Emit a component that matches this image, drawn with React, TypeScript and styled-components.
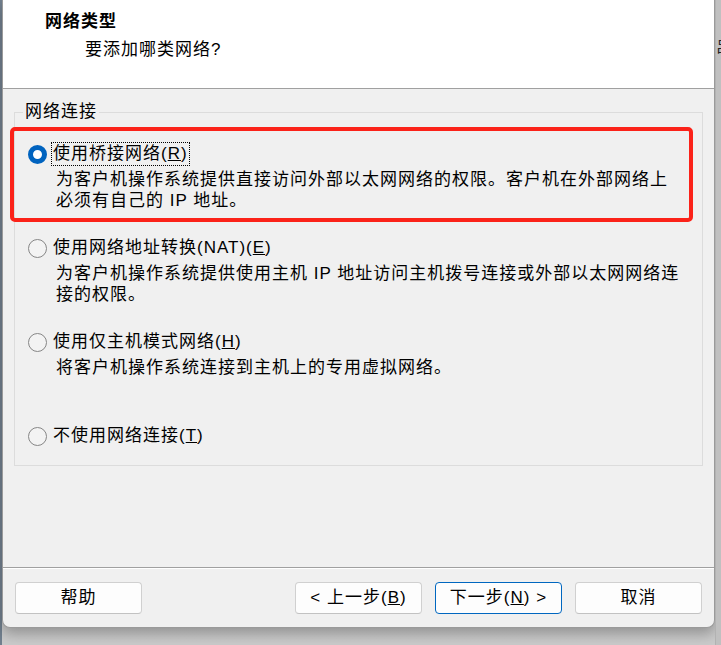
import React from 'react';
import styled, { createGlobalStyle } from 'styled-components';

const GlobalStyle = createGlobalStyle`
  html, body { margin: 0; padding: 0; }
  body {
    background: #c6c6c6;
    font-family: "Liberation Sans", "Noto Sans CJK SC", sans-serif;
    color: #000;
  }
`;

const Screen = styled.div`
  width: 721px;
  height: 645px;
  overflow: hidden;
  position: relative;
  display: flex;
  align-items: flex-start;
  background: linear-gradient(#c2c2c2, #cbcbcb);
`;

const EdgeLine = styled.div`
  width: 2px;
  align-self: stretch;
  background: #72808f;
`;

const Dialog = styled.div`
  width: 713px;
  height: 628px;
  box-sizing: border-box;
  border: 1px solid #9a9a9a;
  border-top: none;
  border-radius: 0 0 8px 8px;
  background: #f0f0f0;
  display: flex;
  flex-direction: column;
  box-shadow: 0 6px 14px rgba(0, 0, 0, 0.28);
  overflow: hidden;
  flex-shrink: 0;
`;

const RightStrip = styled.div`
  flex: 1;
  align-self: stretch;
  overflow: hidden;
  background: #c0c0c0;
  border-left: 1px solid #b2b2b2;
`;

const StripGlyph = styled.div`
  margin-top: 37px;
  font-family: "Noto Sans CJK SC", sans-serif;
  font-size: 15px;
  line-height: 18px;
  white-space: nowrap;
  color: #222;
`;

const Header = styled.div`
  height: 89px;
  background: #fff;
  border-bottom: 1px solid #a0a0a0;
  padding: 12px 0 0 42px;
  box-sizing: border-box;
  flex-shrink: 0;
`;

const Title = styled.div`
  font-size: 17px;
  line-height: 20px;
  font-weight: bold;
  letter-spacing: 1px;
`;

const Subtitle = styled.div`
  margin: 8px 0 0 40px;
  font-size: 17px;
  line-height: 20px;
  letter-spacing: 1px;
`;

const Body = styled.div`
  flex: 1;
  padding: 13px 11px 0 11px;
`;

const Group = styled.fieldset`
  margin: 0;
  padding: 0;
  min-width: 0;
  border: 1px solid #dcdcdc;
`;

const Legend = styled.legend`
  margin-left: 8px;
  padding: 0 2px;
  font-size: 17px;
  line-height: 20px;
  letter-spacing: 1px;
`;

const OptionList = styled.div`
  padding: 20px 0 17px 13px;
  display: flex;
  flex-direction: column;
`;

const Option = styled.div<{ $last?: boolean }>`
  min-height: ${(p) => (p.$last ? 24 : 94)}px;
  display: flex;
  flex-direction: column;
`;

const OptionHead = styled.div`
  display: flex;
  align-items: center;
  height: 24px;
  gap: 4px;
`;

const Radio = styled.span<{ $checked?: boolean }>`
  width: 19px;
  height: 19px;
  box-sizing: border-box;
  border-radius: 50%;
  flex-shrink: 0;
  border: ${(p) => (p.$checked ? '5px solid #0063bf' : '1px solid #868686')};
  background: ${(p) => (p.$checked ? '#ffffff' : '#f3f3f3')};
`;

const OptionLabel = styled.span<{ $focused?: boolean }>`
  padding: 0 2px;
  height: 24px;
  line-height: 24px;
  font-size: 17px;
  letter-spacing: 1px;
  white-space: nowrap;
  outline: ${(p) => (p.$focused ? '1px dotted #000' : 'none')};
  outline-offset: -1px;
`;

const Description = styled.div`
  margin: 3px 0 0 28px;
  font-size: 17px;
  line-height: 21px;
  letter-spacing: 1px;
`;

const Line = styled.div`
  white-space: nowrap;
`;

const Separator = styled.div`
  height: 2px;
  box-sizing: border-box;
  border-top: 1px solid #a0a0a0;
  border-bottom: 1px solid #ffffff;
`;

const Footer = styled.div`
  flex-shrink: 0;
  display: flex;
  flex-direction: column;
`;

const ButtonRow = styled.div`
  display: flex;
  align-items: center;
  padding: 13px 12px 13px 12px;
`;

const ButtonGroup = styled.div`
  margin-left: auto;
  display: flex;
  gap: 13px;
`;

const Button = styled.button<{ $default?: boolean }>`
  width: 127px;
  height: 32px;
  box-sizing: border-box;
  border-radius: 4px;
  border: 1px solid ${(p) => (p.$default ? '#0067c0' : '#d0d0d0')};
  border-bottom-color: ${(p) => (p.$default ? '#0067c0' : '#c2c2c2')};
  background: #fdfdfd;
  font-family: "Liberation Sans", "Noto Sans CJK SC", sans-serif;
  font-size: 17px;
  letter-spacing: 1px;
  color: #000;
  padding: 0;
  line-height: 30px;
`;

const Highlight = styled.div`
  position: absolute;
  left: 10px;
  top: 127px;
  width: 683px;
  height: 95px;
  box-sizing: border-box;
  border: 4px solid #fb2219;
  border-radius: 5px;
  pointer-events: none;
`;

export default function App() {
  return (
    <>
      <GlobalStyle />
      <Screen>
        <EdgeLine />
        <Dialog>
          <Header>
            <Title>网络类型</Title>
            <Subtitle>要添加哪类网络?</Subtitle>
          </Header>
          <Body>
            <Group>
              <Legend>网络连接</Legend>
              <OptionList>
                <Option>
                  <OptionHead>
                    <Radio $checked />
                    <OptionLabel $focused>
                      使用桥接网络(<u>R</u>)
                    </OptionLabel>
                  </OptionHead>
                  <Description>
                    <Line>为客户机操作系统提供直接访问外部以太网网络的权限。客户机在外部网络上</Line>
                    <Line>必须有自己的 IP 地址。</Line>
                  </Description>
                </Option>
                <Option>
                  <OptionHead>
                    <Radio />
                    <OptionLabel>
                      使用网络地址转换(NAT)(<u>E</u>)
                    </OptionLabel>
                  </OptionHead>
                  <Description>
                    <Line>为客户机操作系统提供使用主机 IP 地址访问主机拨号连接或外部以太网网络连</Line>
                    <Line>接的权限。</Line>
                  </Description>
                </Option>
                <Option>
                  <OptionHead>
                    <Radio />
                    <OptionLabel>
                      使用仅主机模式网络(<u>H</u>)
                    </OptionLabel>
                  </OptionHead>
                  <Description>
                    <Line>将客户机操作系统连接到主机上的专用虚拟网络。</Line>
                  </Description>
                </Option>
                <Option $last>
                  <OptionHead>
                    <Radio />
                    <OptionLabel>
                      不使用网络连接(<u>T</u>)
                    </OptionLabel>
                  </OptionHead>
                </Option>
              </OptionList>
            </Group>
          </Body>
          <Footer>
            <Separator />
            <ButtonRow>
              <Button>帮助</Button>
              <ButtonGroup>
                <Button>
                  &lt; 上一步(<u>B</u>)
                </Button>
                <Button $default>
                  下一步(<u>N</u>) &gt;
                </Button>
                <Button>取消</Button>
              </ButtonGroup>
            </ButtonRow>
          </Footer>
        </Dialog>
        <RightStrip>
          <StripGlyph>吕</StripGlyph>
        </RightStrip>
        <Highlight />
      </Screen>
    </>
  );
}
